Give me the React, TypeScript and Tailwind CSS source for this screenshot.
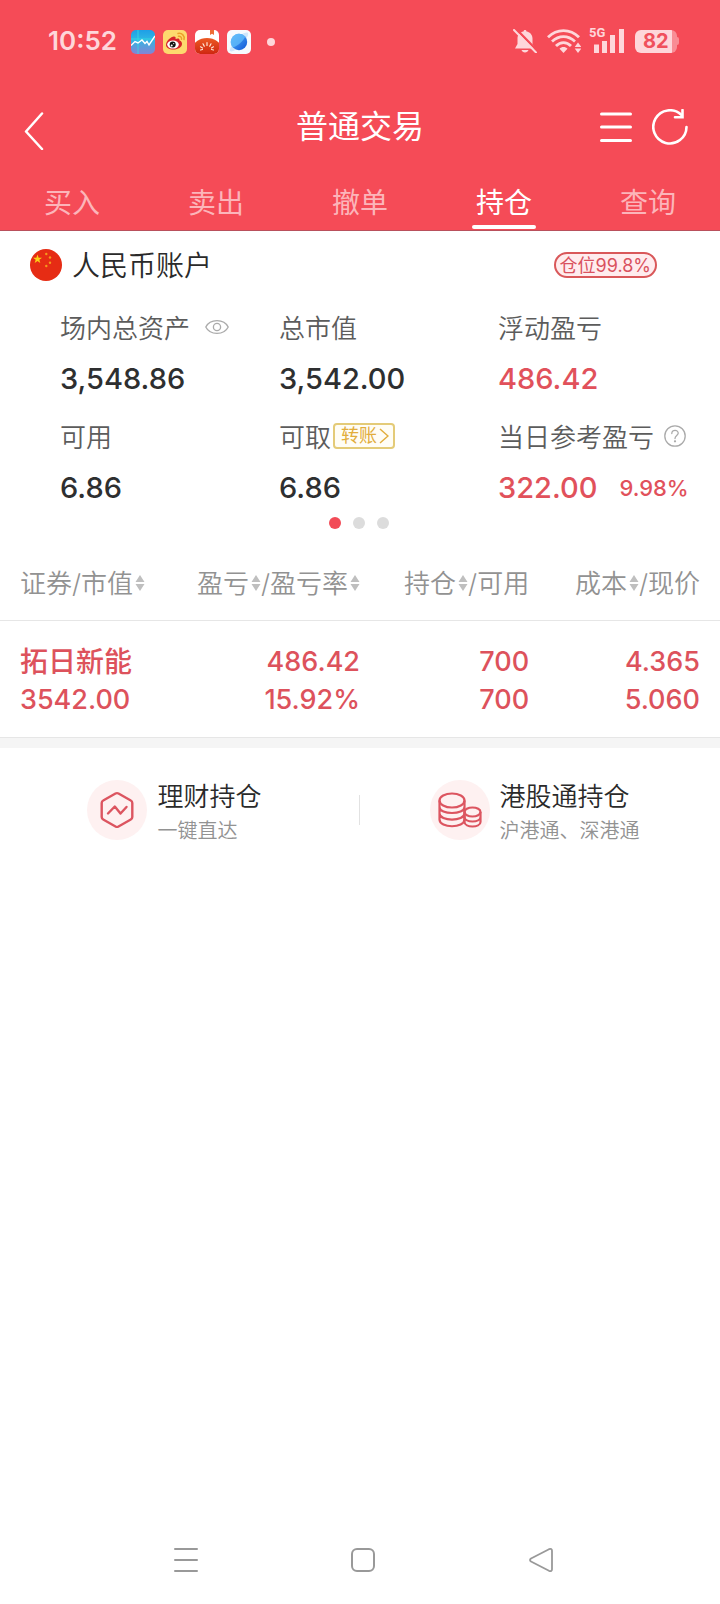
import type { ReactNode } from "react";

const tabs = ["买入", "卖出", "撤单", "持仓", "查询"];

function StockAppIcon() {
  return (
    <svg viewBox="0 0 24 24" className="size-6">
      <defs>
        <linearGradient id="stock" x1="0" y1="0" x2="0" y2="1">
          <stop offset="0" stopColor="#1e9fe6" />
          <stop offset="0.4" stopColor="#2fb6e4" />
          <stop offset="1" stopColor="#8583d4" />
        </linearGradient>
      </defs>
      <rect width="24" height="24" rx="5" fill="url(#stock)" />
      <path d="M7 0v24M0 9h24" stroke="#35dfe0" strokeWidth="1" opacity="0.8" />
      <path d="M0 15.500l4-4 3 1.500 4-3 3 3.500 2-2 2 3.500 6-9" fill="none" stroke="#fff" strokeWidth="1.400" />
    </svg>
  );
}

function WeiboIcon() {
  return (
    <svg viewBox="0 0 24 24" className="size-6">
      <rect width="24" height="24" rx="5" fill="#fdd96e" />
      <path d="M3 15c0-4 5-8.500 8-8.500 1.500 0 2 1 1.500 2.500 2-1 4.500-1 4 1.500 2 .5 2.500 2 2.500 3.500 0 3-4 5.500-8.500 5.500S3 17.500 3 15z" fill="#d8232a" />
      <ellipse cx="10" cy="14.600" rx="5.800" ry="4" fill="#fff" />
      <circle cx="9.700" cy="14.600" r="3" fill="#111" />
      <circle cx="8.700" cy="15.400" r="1" fill="#fff" />
      <circle cx="10.700" cy="13.600" r="0.600" fill="#fff" />
      <path d="M15 3.500c4-.8 7 2.500 6 6M15.500 6.300c2-.3 3.500 1.200 3 3" fill="none" stroke="#ec9f28" strokeWidth="1.500" strokeLinecap="round" />
    </svg>
  );
}

function TomatoIcon() {
  return (
    <svg viewBox="0 0 24 24" className="size-6">
      <defs>
        <clipPath id="tomatoClip">
          <rect width="24" height="24" rx="5" />
        </clipPath>
        <linearGradient id="tomato" x1="0" y1="0" x2="0" y2="1">
          <stop offset="0" stopColor="#ec5a24" />
          <stop offset="1" stopColor="#c81a0c" />
        </linearGradient>
      </defs>
      <g clipPath="url(#tomatoClip)">
        <rect width="24" height="24" fill="#fff" />
        <path d="M15 0h4v5l-2-1.300L15 5z" fill="#ee6b35" />
        <ellipse cx="12" cy="18" rx="14" ry="10" fill="url(#tomato)" />
        <path d="M12 12.500v3M8 13.800l1.300 2.400M16 13.800l-1.300 2.400M5.500 16.800l2 1.200M18.500 16.800l-2 1.200M5.500 20l2-.5M18.500 20l-2-.5" stroke="#ffe9d8" strokeWidth="1.200" strokeLinecap="round" />
      </g>
    </svg>
  );
}

function BrowserIcon() {
  return (
    <svg viewBox="0 0 24 24" className="size-6">
      <defs>
        <linearGradient id="globe" x1="0" y1="0" x2="1" y2="1">
          <stop offset="0" stopColor="#58b8fb" />
          <stop offset="1" stopColor="#0d55d8" />
        </linearGradient>
      </defs>
      <rect width="24" height="24" rx="5" fill="#f6fafe" />
      <path d="M21 3c-1-1-4 .2-6 1.200L19 9c1.400-2 2.800-5 2-6zM3 21c1 1 3.500 0 5.500-1L4.500 16C3.400 18 2.300 20.200 3 21z" fill="#cfe6fb" />
      <circle cx="12" cy="12" r="8.200" fill="url(#globe)" />
      <path d="M5.500 17.500C10 17 17 10 18.300 6.500A8.200 8.200 0 0 0 4.500 9a8.200 8.200 0 0 0 1 8.500z" fill="#63bdfb" opacity="0.750" />
    </svg>
  );
}

function StatusBar() {
  return (
    <div className="flex h-[82px] items-center pl-12 pr-[41px] text-[#fed6da]">
      <span className="w-[83px] text-[26px] font-semibold leading-8">10:52</span>
      <div className="flex flex-1 items-center gap-2 pt-0.5">
        <StockAppIcon />
        <WeiboIcon />
        <TomatoIcon />
        <BrowserIcon />
        <span className="ml-2 size-2 rounded-full bg-[#fed6da]" />
      </div>
      <div className="flex items-center gap-2">
        <svg viewBox="0 0 24 24" className="mr-0.5 size-6" fill="currentColor">
          <path d="M12 1c1 0 1.500.6 1.500 1.500 3.800.7 6 3.500 6 7V15l2.500 4.500H2L4.500 15V9.500c0-3.500 2.200-6.300 6-7C10.500 1.600 11 1 12 1zM8.500 21h7c-.5 1.600-1.800 2.500-3.500 2.500S9 22.600 8.500 21z" />
          <path d="M2.500-.5l22 22.500" stroke="#f54b57" strokeWidth="2.500" />
          <path d="M1 1l22 22.500" stroke="currentColor" strokeWidth="2" strokeLinecap="round" />
        </svg>
        <svg viewBox="0 0 34 24" className="h-6 w-[34px]" fill="none" stroke="currentColor" strokeWidth="2.800">
          <path d="M1 8.200c9-8.900 22-8.900 31 0M5 12.600c7-6.600 16-6.600 23 0M9 17c4.500-4.600 10.500-4.600 15 0" />
          <path d="M16.500 24l-4-4.200c2-2.300 6-2.300 8 0z" fill="currentColor" stroke="none" />
          <path d="M31 13.500l3.300 4.500h-6.600zM31 24l3.300-4.500h-6.600z" fill="currentColor" stroke="none" />
        </svg>
        <div className="relative">
          <svg viewBox="0 0 36 24" className="h-6 w-9" fill="currentColor">
            <path d="M5 15.500h5V24H5zM13 12h5v12h-5zM21 6h5v18h-5zM30 0h5v24h-5z" />
          </svg>
          <span className="absolute left-0 -top-1 font-[Roboto] text-[13px] font-bold leading-4">5G</span>
        </div>
        <div className="ml-0.5 flex items-center">
          <div className="flex h-[23px] w-[42px] items-center overflow-hidden rounded-[6px] bg-[linear-gradient(to_right,#fed6da_37px,#f98d95_37px)] pl-2 text-[20px] font-bold leading-6 text-[#f0505c]">
            82
          </div>
          <span className="h-2 w-0.5 rounded-r-full bg-[#f98d95]" />
        </div>
      </div>
    </div>
  );
}

function TitleBar() {
  return (
    <div className="grid h-[90px] grid-cols-[1fr_auto_1fr] items-center px-6">
      <button aria-label="返回" className="mt-2 justify-self-start">
        <svg viewBox="0 0 20 38" className="h-[38px] w-5" fill="none" stroke="#fff" strokeWidth="2.500" strokeLinecap="round" strokeLinejoin="round">
          <path d="M18 1.500L2 19.500l16 17.500" />
        </svg>
      </button>
      <h1 className="text-[32px] leading-10 text-white">普通交易</h1>
      <div className="mr-2 flex items-center gap-5 justify-self-end">
        <button aria-label="菜单">
          <svg viewBox="0 0 32 32" className="size-8" stroke="#fff" strokeWidth="3" strokeLinecap="round">
            <path d="M1.500 3h29M1.500 16h29M1.500 29.500h29" />
          </svg>
        </button>
        <button aria-label="刷新">
          <svg viewBox="0 0 36 36" className="size-9" fill="none" stroke="#fff" strokeWidth="2.600" strokeLinecap="round">
            <path d="M34.500 18a16.600 16.600 0 1 1-5-12" />
            <path d="M30.500 1v7.300H23" />
          </svg>
        </button>
      </div>
    </div>
  );
}

function Tabs() {
  return (
    <nav className="grid h-[59px] grid-cols-5 border-b border-[#b9505c]">
      {tabs.map((t) => {
        const active = t === "持仓";
        return (
          <button
            key={t}
            aria-current={active ? "page" : undefined}
            className={`flex flex-col items-center justify-between pb-px pt-[13px] text-[28px] leading-9 ${active ? "text-white" : "text-[#fcb5ba]"}`}
          >
            {t}
            <span className={`h-1 w-16 rounded-full ${active ? "bg-white" : ""}`} />
          </button>
        );
      })}
    </nav>
  );
}

function Metric({ label, extra, value, red, side }: { label: string; extra?: ReactNode; value: string; red?: boolean; side?: string }) {
  return (
    <div className="whitespace-nowrap">
      <dt className="flex h-10 items-center text-[26px] font-[350] text-[#5c5c5c]">
        <span className="pt-0.5">{label}</span>
        {extra}
      </dt>
      <dd className={`flex h-16 items-center gap-[22px] text-[29px] font-medium ${red ? "text-[#e1515b]" : "text-[#2e2f30]"}`}>
        {value}
        {side && <span className="text-[22px]">{side}</span>}
      </dd>
    </div>
  );
}

function Account() {
  return (
    <section>
      <div className="flex h-[68px] items-center pl-[30px] pr-[63px]">
        <svg viewBox="0 0 32 32" className="size-8">
          <circle cx="16" cy="16" r="16" fill="#e62c14" />
          <path d="M7.500 5.600l1.100 3.200H12l-2.700 2 1 3.200-2.800-1.900L4.700 14l1-3.200-2.700-2h3.400z" fill="#fcd116" />
          <g fill="#f59a1c">
            <circle cx="16.300" cy="5" r="1.200" />
            <circle cx="20" cy="8.500" r="1.200" />
            <circle cx="20" cy="13.800" r="1.200" />
            <circle cx="16.300" cy="17" r="1.200" />
          </g>
        </svg>
        <h2 className="ml-[10px] flex-1 pt-0.5 text-[28px] font-[350] leading-9 text-[#2a2a2a]">人民币账户</h2>
        <span className="flex h-[26px] items-center rounded-full border-2 border-[#d9585a] bg-[#ffecee] px-1 pt-0.5 text-[18px] leading-5 text-[#d9525e]">仓位99.8%</span>
      </div>
      <dl className="grid grid-cols-3 gap-y-[5px] pl-[60px] pr-[3px] pt-2">
        <Metric
          label="场内总资产"
          value="3,548.86"
          extra={
            <button aria-label="隐藏资产" className="ml-[15px]">
              <svg viewBox="0 0 24 18" className="h-[18px] w-6" fill="none" stroke="#aaa" strokeWidth="1.300">
                <path d="M.8 9C5-.8 19-.8 23.200 9 19 18.800 5 18.800.8 9z" transform="translate(0 1.200) scale(1 .87)" />
                <circle cx="12" cy="9" r="3.600" />
              </svg>
            </button>
          }
        />
        <Metric label="总市值" value="3,542.00" />
        <Metric label="浮动盈亏" value="486.42" red />
        <Metric label="可用" value="6.86" />
        <Metric
          label="可取"
          value="6.86"
          extra={
            <button className="ml-0.5 flex h-[26px] items-center gap-0.5 rounded-[4px] border-2 border-[#e4cb78] bg-[#fffdf5] pl-[6px] pr-1 text-[18px] font-normal leading-5 text-[#e2ad3c]">
              转账
              <svg viewBox="0 0 10 16" className="h-4 w-[10px]" fill="none" stroke="currentColor" strokeWidth="1.500">
                <path d="M1 1l8 7-8 7" />
              </svg>
            </button>
          }
        />
        <Metric
          label="当日参考盈亏"
          value="322.00"
          side="9.98%"
          red
          extra={
            <button aria-label="说明" className="ml-[10px]">
              <svg viewBox="0 0 22 22" className="size-[22px]" fill="none" stroke="#aaa" strokeWidth="1.300">
                <circle cx="11" cy="11" r="10.200" />
                <path d="M7.800 8.500c0-4.300 6.600-4 6.400-.2-.1 2.200-3.200 2.500-3.200 5.200" strokeLinecap="round" />
                <circle cx="11" cy="16.300" r="0.500" fill="#aaa" />
              </svg>
            </button>
          }
        />
      </dl>
      <div className="-mt-[3px] flex justify-center gap-3 pr-0.5">
        <span className="size-3 rounded-full bg-[#f24b57]" />
        <span className="size-3 rounded-full bg-[#dcdcdc]" />
        <span className="size-3 rounded-full bg-[#dcdcdc]" />
      </div>
    </section>
  );
}

function Sort() {
  return (
    <svg viewBox="0 0 10 16" className="ml-0.5 h-4 w-[10px]" fill="#bfbfbf">
      <path d="M5 0l4.500 7h-9zM5 16l4.500-7h-9z" />
    </svg>
  );
}

function Head({ first, second, last, left }: { first: string; second: string; last?: boolean; left?: boolean }) {
  return (
    <th scope="col" className="pt-px font-[350]">
      <button className={`flex w-full items-center ${left ? "justify-start" : "justify-end"}`}>
        {first}
        {!left && <Sort />}/{second}
        {last && <Sort />}
      </button>
    </th>
  );
}

function Holdings() {
  return (
    <table className="mt-[17px] w-full table-fixed whitespace-nowrap">
      <colgroup>
        <col className="w-[25%]" />
        <col className="w-[25%]" />
        <col className="w-[23.5%]" />
        <col className="w-[26.5%]" />
      </colgroup>
      <thead className="border-b border-[#e6e6e6]">
        <tr className="h-[74px] text-[26px] text-[#929292] [&>th:first-child]:pl-5 [&>th:last-child]:pr-5">
          <Head first="证券" second="市值" left last />
          <Head first="盈亏" second="盈亏率" last />
          <Head first="持仓" second="可用" />
          <Head first="成本" second="现价" />
        </tr>
      </thead>
      <tbody>
        <tr className="h-[117px] text-right text-[27px] font-medium leading-[38px] text-[#dd525c] [&>td]:pt-1">
          <td className="pl-5 text-left">
            <div className="text-[28px]">拓日新能</div>
            <div>3542.00</div>
          </td>
          <td>
            <div>486.42</div>
            <div>15.92%</div>
          </td>
          <td>
            <div>700</div>
            <div>700</div>
          </td>
          <td className="pr-5">
            <div>4.365</div>
            <div>5.060</div>
          </td>
        </tr>
      </tbody>
    </table>
  );
}

function Shortcut({ icon, title, note }: { icon: ReactNode; title: string; note: string }) {
  return (
    <a href="#" className="flex flex-1 items-center justify-center gap-[10px] pr-[10px]">
      <span className="flex size-[60px] items-center justify-center rounded-full bg-[#fef1f1]">{icon}</span>
      <span className="flex flex-col pt-[6px]">
        <span className="text-[26px] font-[350] leading-9 text-[#2a2a2a]">{title}</span>
        <span className="text-[20px] font-[350] leading-8 text-[#929292]">{note}</span>
      </span>
    </a>
  );
}

export default function App() {
  return (
    <div className="flex min-h-screen flex-col bg-white font-[Inter,'Noto_Sans_CJK_SC',sans-serif]">
      <header className="bg-[#f54b57]">
        <StatusBar />
        <TitleBar />
        <Tabs />
      </header>
      <main>
        <Account />
        <Holdings />
        <div className="h-[11px] border-t border-[#e6e6e6] bg-[#f5f5f5]" />
        <section className="flex items-center pb-7 pr-px pt-[25px]">
          <Shortcut
            title="理财持仓"
            note="一键直达"
            icon={
              <svg viewBox="0 0 36 38" className="h-[38px] w-9" fill="none" stroke="#dc5560" strokeWidth="2.400" strokeLinejoin="round" strokeLinecap="round">
                <path d="M16.500 2.500q1.500-.8 3 0l12.300 7q1.500.8 1.500 2.500v14q0 1.700-1.500 2.500l-12.300 7q-1.500.8-3 0l-12.300-7q-1.500-.8-1.500-2.500V12q0-1.700 1.500-2.500z" />
                <path d="M9 22.500l6.800-7 5.700 7L27.500 16" />
              </svg>
            }
          />
          <span className="h-[30px] w-px bg-[#e2e2e2]" />
          <Shortcut
            title="港股通持仓"
            note="沪港通、深港通"
            icon={
              <svg viewBox="0 0 44 36" className="h-9 w-11" fill="none" stroke="#dc5560" strokeWidth="2.200">
                <ellipse cx="14" cy="8.500" rx="12.500" ry="7" />
                <path d="M1.500 8.500v19c0 9 25 9 25 0v-19M1.500 15c0 8 25 8 25 0M1.500 21.300c0 8.500 25 8.500 25 0" />
                <ellipse cx="34.500" cy="20" rx="8" ry="4.500" />
                <path d="M26.500 20v10c0 6 16 6 16 0V20M26.500 25c0 6 16 6 16 0" />
              </svg>
            }
          />
        </section>
      </main>
      <nav className="mt-auto grid h-[88px] grid-cols-3 items-center justify-items-center pl-[97px] pr-[90px]">
        <button aria-label="最近任务">
          <svg viewBox="0 0 24 24" className="size-6" stroke="#999" strokeWidth="2" strokeLinecap="round">
            <path d="M1 1h22M1 12h22M1 23h22" />
          </svg>
        </button>
        <button aria-label="主屏幕" className="size-6 rounded-[6px] border-2 border-[#999]" />
        <button aria-label="后退">
          <svg viewBox="0 0 24 24" className="size-6" fill="none" stroke="#999" strokeWidth="1.800" strokeLinejoin="round">
            <path d="M2 10.500L20 1.200q3-1 3 1.500v18.600q0 2.500-3 1.500L2 13.500q-2-1.500 0-3z" />
          </svg>
        </button>
      </nav>
    </div>
  );
}
